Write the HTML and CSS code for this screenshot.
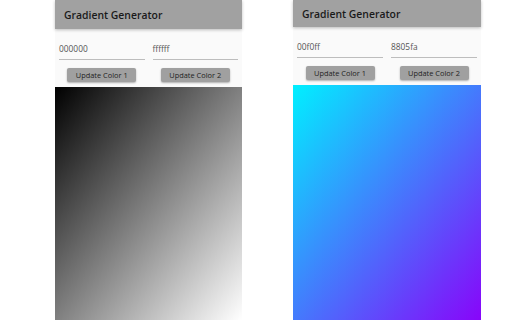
FILE: index.html
```html
<!DOCTYPE html>
<html>
<head>
<meta charset="utf-8">
<link rel="stylesheet" href="styles.css">
</head>
<body>
<div class="stage">
  <div class="screen screen-left">
    <div class="appbar appbar-tall">Gradient Generator</div>
    <div class="controls">
      <div class="col">
        <div class="field">000000</div>
        <button class="btn">Update Color 1</button>
      </div>
      <div class="col">
        <div class="field">ffffff</div>
        <button class="btn">Update Color 2</button>
      </div>
    </div>
    <div class="gradient gradient-mono"></div>
  </div>
  <div class="screen screen-right">
    <div class="appbar">Gradient Generator</div>
    <div class="controls">
      <div class="col">
        <div class="field">00f0ff</div>
        <button class="btn">Update Color 1</button>
      </div>
      <div class="col">
        <div class="field">8805fa</div>
        <button class="btn">Update Color 2</button>
      </div>
    </div>
    <div class="gradient gradient-color"></div>
  </div>
</div>
</body>
</html>
```
FILE: styles.css
```css
html, body {
  margin: 0;
  padding: 0;
  background: #ffffff;
  width: 512px;
  height: 320px;
  overflow: hidden;
  font-family: "Open Sans", "Noto Sans", sans-serif;
}
.stage {
  display: flex;
  height: 320px;
  padding-left: 55px;
  gap: 51px;
}
.screen {
  display: flex;
  flex-direction: column;
  height: 320px;
  background: #fafafa;
}
.screen-left { width: 187px; }
.screen-right { width: 188px; }
.appbar {
  height: 27px;
  background: #a1a1a1;
  color: #1a1a1a;
  font-size: 10.4px;
  font-weight: 600;
  display: flex;
  align-items: center;
  padding-left: 9px;
  box-shadow: 0 1px 3px rgba(0,0,0,0.25);
  position: relative;
  z-index: 1;
}
.appbar-tall { height: 29px; }
.controls {
  display: flex;
  gap: 8px;
  padding: 0 4px;
  height: 58px;
}
.col {
  flex: 1;
  display: flex;
  flex-direction: column;
  align-items: center;
}
.field {
  align-self: stretch;
  height: 21px;
  margin-top: 9px;
  border-bottom: 1px solid #bdbdbd;
  font-size: 8.4px;
  color: #555;
  display: flex;
  align-items: center;
}
.btn {
  margin-top: 8px;
  height: 14px;
  width: 69px;
  padding: 0;
  border: none;
  border-radius: 2px;
  background: #a0a0a0;
  color: #222;
  font-family: "Open Sans", "Noto Sans", sans-serif;
  font-size: 7.4px;
  box-shadow: 0 1px 2px rgba(0,0,0,0.3);
}
.gradient {
  flex: 1;
}
.gradient-mono {
  background: linear-gradient(to bottom right, #000000, #ffffff);
}
.gradient-color {
  background: linear-gradient(to bottom right, #00f0ff, #8805fa);
}
```
